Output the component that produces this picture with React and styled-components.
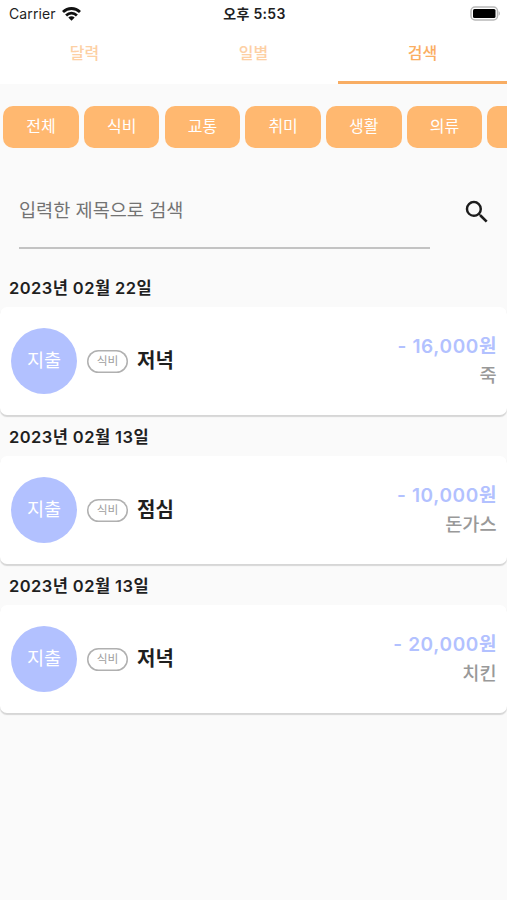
import React from 'react'
import styled, { createGlobalStyle } from 'styled-components'
import { MdSearch } from 'react-icons/md'

const GlobalStyle = createGlobalStyle`
    * {
        box-sizing: border-box;
    }
    body {
        margin: 0;
        background-color: #fafafa;
        font-family: Inter, "Noto Sans CJK KR", sans-serif;
    }
`
const Container = styled.div`
    width: 100%;
    height: 100vh;
    overflow: hidden;
    background-color: #fafafa;
    color: #1f1f1f;
`
const Header = styled.header`
    height: 84px;
    background-color: white;
`
const StatusBar = styled.div`
    height: 27px;
    padding: 0 7px 0 9px;
    display: grid;
    grid-template-columns: 1fr auto 1fr;
    align-items: center;
    font-size: 14px;
    line-height: 27px;
`
const Carrier = styled.div`
    display: flex;
    align-items: center;
    gap: 6px;
    letter-spacing: 0.1px;
`
const Time = styled.div`
    font-size: 14px;
    font-weight: 600;
    letter-spacing: 0.3px;
    white-space: nowrap;
`
const Battery = styled.svg`
    justify-self: end;
`
const Tabs = styled.nav`
    height: 57px;
    display: flex;
`
const Tab = styled.div`
    flex: 1;
    padding-top: 13px;
    text-align: center;
    font-size: 16px;
    font-weight: 500;
    line-height: 26px;
    color: ${props => props.$active ? "#fbae62" : "#fdd0a4"};
    border-bottom: ${props => props.$active ? "3px solid #f8ad63" : "none"};
`
const Chips = styled.div`
    display: flex;
    gap: 5.2px;
    padding: 22px 0 0 3.3px;
    overflow: hidden;
`
const Chip = styled.button`
    flex: 0 0 75.5px;
    height: 41.5px;
    padding: 0 0 3px;
    border: none;
    border-radius: 10px;
    background-color: #ffb870;
    color: white;
    font-family: inherit;
    font-size: 16px;
`
const SearchBar = styled.div`
    display: flex;
    align-items: flex-start;
    justify-content: space-between;
    padding: 27px 15px 0 19px;
    height: 126.5px;
`
const SearchInput = styled.input`
    width: 411px;
    height: 74px;
    padding: 0 0 2px;
    border: none;
    border-bottom: 2px solid #c3c3c3;
    background: transparent;
    font-family: inherit;
    font-size: 18.6px;
    outline: none;
    &::placeholder {
        color: #737373;
        opacity: 1;
    }
`
const SearchIcon = styled(MdSearch)`
    margin-top: 22px;
    font-size: 30px;
    color: #1c1c1c;
`
const DateTitle = styled.h2`
    height: 33px;
    margin: 0;
    padding: 1px 9px 0;
    font-size: 16.5px;
    font-weight: 600;
    line-height: 27px;
    letter-spacing: 0.43px;
`
const Card = styled.div`
    height: 108px;
    margin-bottom: 8.2px;
    padding: 0 10.5px 0 11px;
    display: flex;
    align-items: center;
    border-radius: 7px;
    background-color: white;
    box-shadow: 0 1.5px 1px #d6d6d6;
`
const TypeCircle = styled.div`
    width: 66px;
    height: 66px;
    padding-bottom: 5px;
    display: flex;
    align-items: center;
    justify-content: center;
    border-radius: 50%;
    background-color: #b2c1ff;
    color: white;
    font-size: 18.6px;
`
const Category = styled.div`
    width: 41px;
    height: 23px;
    margin: 0 9px 0 10px;
    border-radius: 12px;
    box-shadow: inset 0 0 0 1.5px #b0b0b0;
    color: #a0a0a0;
    font-size: 11.8px;
    line-height: 22px;
    text-align: center;
`
const Name = styled.div`
    font-size: 20px;
    font-weight: 600;
    padding-bottom: 4px;
`
const Info = styled.div`
    margin-left: auto;
    text-align: right;
    font-size: 18.6px;
    font-weight: 500;
    line-height: 29px;
    color: #999;
`
const Price = styled.div`
    font-size: 19px;
    font-weight: 600;
    letter-spacing: 0.65px;
    margin-right: -0.65px;
    color: #b2c1ff;
`

const tabs = ["달력", "일별", "검색"]
const categories = ["전체", "식비", "교통", "취미", "생활", "의류", ""]
const items = [
    { id: 1, date: "2023년 02월 22일", category: "식비", name: "저녁", price: "16,000", desc: "죽" },
    { id: 2, date: "2023년 02월 13일", category: "식비", name: "점심", price: "10,000", desc: "돈가스" },
    { id: 3, date: "2023년 02월 13일", category: "식비", name: "저녁", price: "20,000", desc: "치킨" },
]

const WifiIcon = () => (
    <svg width="19" height="14" viewBox="0 0 19 14" fill="none" stroke="#111" strokeWidth="2.8">
        <path d="M1 5C5.8.3 13.2.3 18 5" />
        <path d="M4.1 8.4c3.1-3 7.7-3 10.8 0" />
        <path d="M9.5 13.7 6.3 10.5c1.8-1.7 4.6-1.7 6.4 0z" fill="#111" stroke="none" />
    </svg>
)

const BatteryIcon = () => (
    <Battery width="30" height="15" viewBox="0 0 30 15">
        <rect x="1" y="1" width="26.5" height="13" rx="4" fill="#fff" stroke="#b8b8b8" strokeWidth="1.5" />
        <rect x="3" y="3" width="22.5" height="9" rx="1.5" fill="#000" />
        <path d="M28.7 5.3c1.5.7 1.5 3.7 0 4.4z" fill="#b0b0b0" />
    </Battery>
)

function App() {
  return (
    <Container>
        <GlobalStyle/>
        <Header>
            <StatusBar>
                <Carrier>Carrier <WifiIcon/></Carrier>
                <Time>오후 5:53</Time>
                <BatteryIcon/>
            </StatusBar>
            <Tabs>
                {tabs.map((tab)=>(
                    <Tab key={tab} $active={tab === "검색"}>{tab}</Tab>
                ))}
            </Tabs>
        </Header>
        <Chips>
            {categories.map((category)=>(
                <Chip key={category}>{category}</Chip>
            ))}
        </Chips>
        <SearchBar>
            <SearchInput placeholder="입력한 제목으로 검색"/>
            <SearchIcon/>
        </SearchBar>
        {items.map((item)=>(
            <React.Fragment key={item.id}>
                <DateTitle>{item.date}</DateTitle>
                <Card>
                    <TypeCircle>지출</TypeCircle>
                    <Category>{item.category}</Category>
                    <Name>{item.name}</Name>
                    <Info>
                        <Price>- {item.price}원</Price>
                        {item.desc}
                    </Info>
                </Card>
            </React.Fragment>
        ))}
    </Container>
  )
}

export default App
